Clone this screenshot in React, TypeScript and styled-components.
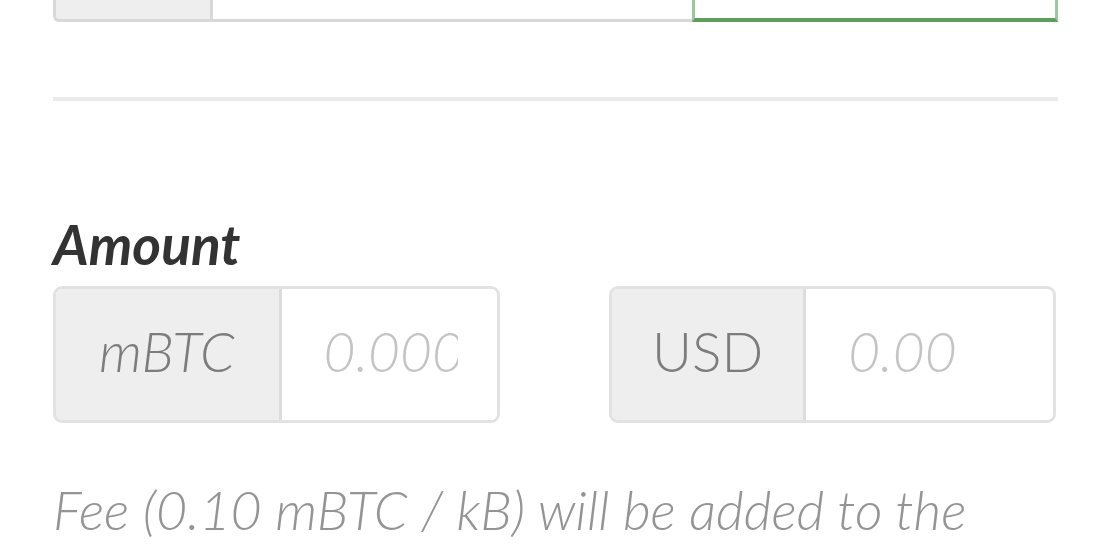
import React from 'react';
import styled, { createGlobalStyle } from 'styled-components';

const GlobalStyle = createGlobalStyle`
  html, body {
    margin: 0;
    padding: 0;
    background: #ffffff;
    overflow: hidden;
  }
  body {
    font-family: Lato, 'Open Sans', sans-serif;
  }
`;

const App = () => {
  return (
    <React.Fragment>
      <GlobalStyle />
      <Page>
        <AddressGroup>
          <AddressAddon />
          <AddressField />
          <AddressFieldValid />
        </AddressGroup>
        <Divider />
        <AmountLabel>Amount</AmountLabel>
        <AmountRow>
          <InputGroup>
            <Addon italic>mBTC</Addon>
            <AmountInput placeholder="0.0000" />
          </InputGroup>
          <InputGroup>
            <Addon>USD</Addon>
            <AmountInput placeholder="0.00" />
          </InputGroup>
        </AmountRow>
        <FeeNote>Fee (0.10 mBTC / kB) will be added to the</FeeNote>
      </Page>
    </React.Fragment>
  );
};

const Page = styled.section`
  width: 1005px;
  padding-left: 53px;
  display: flex;
  flex-direction: column;
`;

const AddressGroup = styled.div`
  display: flex;
  height: 60px;
  margin-top: -38px;
`;

const AddressAddon = styled.div`
  width: 154px;
  background: #eeeeee;
  border: 3px solid #d8d8d8;
  border-top: none;
  border-radius: 0 0 0 6px;
`;

const AddressField = styled.div`
  flex: 1;
  background: #ffffff;
  border-bottom: 3px solid #d8d8d8;
`;

const AddressFieldValid = styled.div`
  width: 360px;
  background: #ffffff;
  border: 3px solid #9cc89c;
  border-top: none;
  border-bottom: 4px solid #5f9e5f;
`;

const Divider = styled.hr`
  width: 1005px;
  height: 4px;
  margin: 75px 0 0 0;
  border: none;
  background: #ebebeb;
`;

const AmountLabel = styled.label`
  margin-top: 116px;
  font-size: 55px;
  line-height: 1;
  font-weight: 700;
  font-style: italic;
  color: #333333;
`;

const AmountRow = styled.div`
  display: grid;
  grid-template-columns: 447px 447px;
  column-gap: 109px;
  margin-top: 14px;
`;

const InputGroup = styled.div`
  display: flex;
  height: 137px;
  box-sizing: border-box;
  border: 3px solid #e2e2e2;
  border-radius: 9px;
  overflow: hidden;
`;

const Addon = styled.div<{ italic?: boolean }>`
  flex: none;
  display: flex;
  align-items: center;
  justify-content: center;
  padding: 0 ${(props) => (props.italic ? '44px 8px 43px' : '40px 8px 40px')};
  background: #eeeeee;
  border-right: 3px solid #dcdcdc;
  font-size: 55px;
  font-weight: 300;
  font-style: ${(props) => (props.italic ? 'italic' : 'normal')};
  color: #7c7c7c;
`;

const AmountInput = styled.input`
  flex: 1;
  min-width: 0;
  box-sizing: border-box;
  padding: 0 39px 8px 42px;
  border: none;
  outline: none;
  background: #ffffff;
  font-family: Lato, sans-serif;
  font-size: 55px;
  font-style: italic;
  font-weight: 300;
  &::placeholder {
    color: #c4c4c4;
  }
`;

const FeeNote = styled.p`
  margin: 60px 0 0 0;
  font-size: 53.7px;
  line-height: 1;
  font-style: italic;
  font-weight: 300;
  color: #949494;
  white-space: nowrap;
`;

export default App;
